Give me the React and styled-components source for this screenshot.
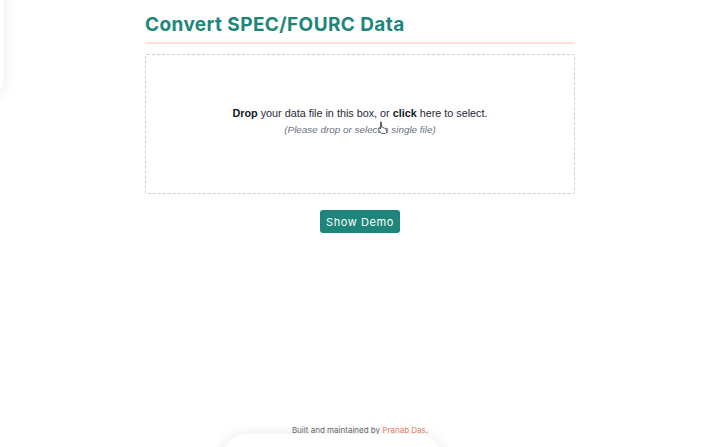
import React from "react";
import styled, { createGlobalStyle } from "styled-components";

const GlobalStyle = createGlobalStyle`
  html, body { margin: 0; padding: 0; background: #fff; }
  body { font-family: Inter, "Noto Sans", sans-serif; color: #1f2937; }
`;

const Page = styled.div`
  position: relative;
  min-height: 100vh;
  display: flex;
  flex-direction: column;
  overflow: hidden;
`;

const Main = styled.main`
  width: 430px;
  margin: 0 auto;
  padding-top: 13px;
  flex: 1;
  display: flex;
  flex-direction: column;
`;

const Title = styled.h1`
  margin: 0;
  padding-bottom: 6px;
  font-size: 19px;
  font-weight: 700;
  letter-spacing: 0.4px;
  color: #1d857a;
  border-bottom: 2px solid #fbe1d8;
`;

const DropZone = styled.div`
  position: relative;
  box-sizing: border-box;
  margin-top: 10px;
  height: 140px;
  border: 1px dashed #cfcfcf;
  border-radius: 2px;
  display: flex;
  flex-direction: column;
  align-items: center;
  justify-content: center;
  gap: 5px;
  padding-bottom: 7px;
  font-family: "Liberation Sans", Arial, sans-serif;
`;

const Lead = styled.p`
  margin: 0;
  font-size: 10.8px;
  color: #1f2937;
  b { font-weight: 700; color: #111827; }
`;

const Hint = styled.p`
  margin: 0;
  font-size: 9.9px;
  font-style: italic;
  color: #6b7280;
`;

const Cursor = styled.svg`
  position: absolute;
  left: 231px;
  top: 66px;
`;

const Actions = styled.div`
  display: flex;
  justify-content: center;
  margin-top: 16px;
`;

const Button = styled.button`
  width: 80px;
  height: 23px;
  padding: 0;
  border: none;
  border-radius: 3px;
  background: #1d857a;
  color: #fff;
  font-family: Inter, "Noto Sans", sans-serif;
  font-size: 11px;
  letter-spacing: 0.6px;
  white-space: nowrap;
  cursor: pointer;
`;

const Footer = styled.footer`
  text-align: center;
  font-size: 8px;
  color: #6b6b6b;
  padding-bottom: 12px;
  a { color: #e8876a; text-decoration: none; }
`;

const Ghost = styled.div`
  position: absolute;
  border-radius: 24px;
  box-shadow: 0 0 10px 4px rgba(0, 0, 0, 0.05);
  background: #fff;
  pointer-events: none;
`;

function HandCursor() {
  return (
    <Cursor width="12" height="13" viewBox="0 0 12 13">
      <path
        d="M3.5 1.2c.6 0 1 .4 1 1v4l.3-.1c.5-.2 1 .1 1.2.5l.2.1c.5-.2 1 0 1.2.5.5-.2 1.1 0 1.3.5l.8 2.2c.3 1 0 2-.9 2.6H5.2c-.7 0-1.3-.4-1.7-1L1.6 8.6c-.3-.5-.2-1 .2-1.3.4-.3 1-.2 1.3.2l.4.5V2.2c0-.6.4-1 1-1z"
        fill="#fff"
        stroke="#333"
        strokeWidth="0.8"
      />
    </Cursor>
  );
}

export default function App() {
  return (
    <Page>
      <GlobalStyle />
      <Ghost style={{ left: -40, top: -30, width: 44, height: 130 }} />
      <Ghost style={{ left: 222, top: 434, width: 220, height: 60 }} />
      <Main>
        <Title>Convert SPEC/FOURC Data</Title>
        <DropZone>
          <Lead>
            <b>Drop</b> your data file in this box, or <b>click</b> here to select.
          </Lead>
          <Hint>(Please drop or select a single file)</Hint>
          <HandCursor />
        </DropZone>
        <Actions>
          <Button>Show Demo</Button>
        </Actions>
      </Main>
      <Footer>
        Built and maintained by <a href="#">Pranab Das</a>.
      </Footer>
    </Page>
  );
}
